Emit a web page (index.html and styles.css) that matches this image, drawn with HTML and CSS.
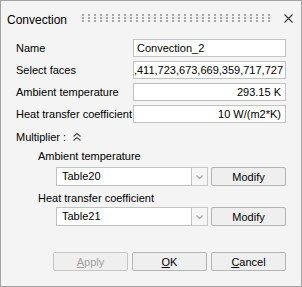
FILE: index.html
```html
<!DOCTYPE html>
<html lang="en">

<head>
    <meta charset="UTF-8">
    <title>Convection</title>
    <link rel="stylesheet" href="styles.css">
</head>

<body>

    <div class="window">
        <div class="titlebar">
            <span class="title">Convection</span>
            <svg class="grip" width="188" height="8">
                <defs>
                    <pattern id="dots" width="6" height="3" patternUnits="userSpaceOnUse">
                        <rect width="2" height="2" fill="#a8a8a8"/>
                    </pattern>
                </defs>
                <rect width="188" height="8" fill="url(#dots)"/>
            </svg>
            <svg class="close" width="9" height="9" viewBox="0 0 9 9">
                <path d="M0.5 0.5 L8.5 8.5 M8.5 0.5 L0.5 8.5" stroke="#3c3c3c" stroke-width="1.1" fill="none"/>
            </svg>
        </div>

        <div class="form">
            <span class="label">Name</span>
            <div class="field">Convection_2</div>
            <span class="label">Select faces</span>
            <div class="field faces"><span>651,673,411,723,673,669,359,717,727</span></div>
            <span class="label">Ambient temperature</span>
            <div class="field num">293.15 K</div>
            <span class="label">Heat transfer coefficient</span>
            <div class="field num">10 W/(m2*K)</div>
        </div>

        <div class="multiplier">
            <span>Multiplier :</span>
            <svg class="collapse" width="8" height="8" viewBox="0 0 8 8">
                <path d="M0.5 3.5 L4 0.5 L7.5 3.5 M0.5 7.5 L4 4.5 L7.5 7.5" stroke="#4a4a4a" stroke-width="1.2" fill="none"/>
            </svg>
        </div>

        <div class="sub-label">Ambient temperature</div>
        <div class="combo-row">
            <div class="combo">Table20</div>
            <div class="drop">
                <svg width="7" height="4" viewBox="0 0 7 4"><path d="M0.5 0.5 L3.5 3.5 L6.5 0.5" stroke="#a0a0a0" stroke-width="1.1" fill="none"/></svg>
            </div>
            <button class="btn">Modify</button>
        </div>

        <div class="sub-label second">Heat transfer coefficient</div>
        <div class="combo-row tight">
            <div class="combo">Table21</div>
            <div class="drop">
                <svg width="7" height="4" viewBox="0 0 7 4"><path d="M0.5 0.5 L3.5 3.5 L6.5 0.5" stroke="#a0a0a0" stroke-width="1.1" fill="none"/></svg>
            </div>
            <button class="btn">Modify</button>
        </div>

        <div class="actions">
            <button class="btn disabled"><u>A</u>pply</button>
            <button class="btn"><u>O</u>K</button>
            <button class="btn"><u>C</u>ancel</button>
        </div>
    </div>

</body>

</html>
```

FILE: styles.css
```css
body,html {
  margin: 0;
  padding: 0;
  font-family: "Liberation Sans", Arial, sans-serif;
  font-size: 11px;
  color: #000;
}

.window {
  box-sizing: border-box;
  width: 302px;
  height: 287px;
  border: 1px solid #a3a3a3;
  background: #f4f4f4;
  display: flex;
  flex-direction: column;
}

.titlebar {
  display: flex;
  align-items: center;
  height: 37px;
  padding-left: 6px;
}

.title {
  font-size: 12px;
  width: 75px;
}

.grip {
  display: block;
  margin-top: -3px;
}

.close {
  display: block;
  margin-left: 14px;
  margin-top: -3px;
}

.form {
  display: grid;
  grid-template-columns: 117px 153px;
  grid-auto-rows: 18px;
  row-gap: 4px;
  padding: 0 15px;
  margin-top: 1px;
}

.label {
  display: flex;
  align-items: center;
}

.field {
  box-sizing: border-box;
  border: 1px solid #c2c2c2;
  background: #fff;
  padding: 0 3px;
  line-height: 16px;
  white-space: nowrap;
  overflow: hidden;
}

.num {
  text-align: right;
  padding-right: 4px;
}

.faces {
  display: flex;
  justify-content: flex-end;
  padding-right: 2px;
}

.multiplier {
  display: flex;
  align-items: center;
  height: 16px;
  margin-top: 6px;
  padding-left: 15px;
}

.collapse {
  display: block;
  margin-left: 7px;
}

.sub-label {
  height: 16px;
  line-height: 16px;
  margin-top: 3px;
  padding-left: 37px;
}

.sub-label.second {
  margin-top: 4px;
}

.combo-row {
  display: flex;
  height: 19px;
  margin-top: 3px;
  padding-left: 55px;
}

.combo-row.tight {
  margin-top: 1px;
}

.combo {
  box-sizing: border-box;
  width: 136px;
  border: 1px solid #c2c2c2;
  background: #fff;
  padding-left: 5px;
  line-height: 17px;
}

.drop {
  box-sizing: border-box;
  width: 16px;
  border: 1px solid #c8c8c8;
  border-left: 0;
  background: #f7f7f7;
  display: flex;
  align-items: center;
  justify-content: center;
}

.drop svg {
  display: block;
}

.btn {
  box-sizing: border-box;
  width: 75px;
  height: 19px;
  margin: 0;
  padding: 0;
  border: 1px solid #b4b4b4;
  border-radius: 2px;
  background: #efefef;
  font-family: "Liberation Sans", Arial, sans-serif;
  font-size: 11px;
  color: #000;
}

.combo-row .btn {
  margin-left: 3px;
}

.btn.disabled {
  color: #a0a0a0;
  border-color: #c6c6c6;
}

.actions {
  display: flex;
  justify-content: flex-end;
  gap: 4px;
  margin-top: auto;
  padding: 0 15px 15px 0;
}
```
